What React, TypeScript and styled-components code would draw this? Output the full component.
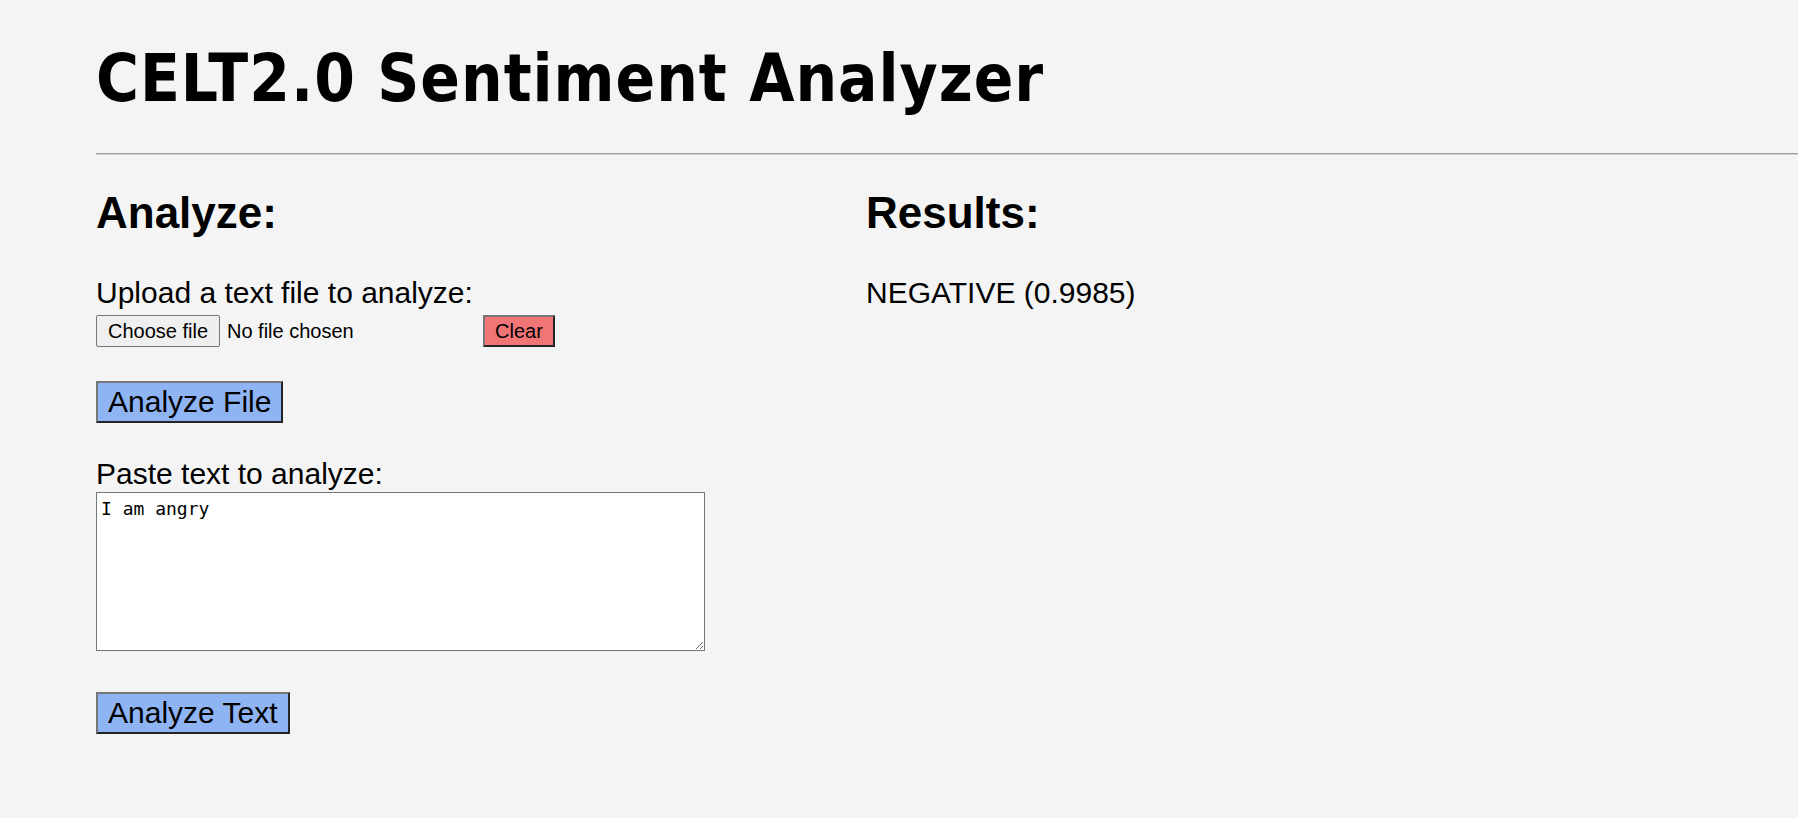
import React from "react";
import styled, { createGlobalStyle } from "styled-components";

const GlobalStyle = createGlobalStyle`
  html, body {
    margin: 0;
    padding: 0;
    background: #f4f4f4;
  }
  body {
    font-family: "Liberation Sans", Arial, sans-serif;
    color: #000;
  }
`;

const Page = styled.div`
  padding: 41px 0 60px 96px;
  box-sizing: border-box;
  width: 100%;
`;

const Title = styled.h1`
  margin: 0;
  font-family: "DejaVu Sans Condensed", "DejaVu Sans", Verdana, sans-serif;
  font-stretch: condensed;
  font-weight: bold;
  font-size: 65px;
  letter-spacing: 1px;
  line-height: 75px;
`;

const Divider = styled.hr`
  margin: 37px 0 33px;
  height: 0;
  border: none;
  border-top: 1px solid #9a9a9a;
  border-bottom: 1px solid #d2d2d2;
`;

const Columns = styled.div`
  display: grid;
  grid-template-columns: 770px 1fr;
  align-items: start;
`;

const Column = styled.section`
  display: flex;
  flex-direction: column;
  align-items: flex-start;
`;

const Heading = styled.h2`
  margin: 0 0 38px;
  font-size: 44px;
  font-weight: bold;
  line-height: 50px;
`;

const Label = styled.label<{ $gap?: number }>`
  display: block;
  margin-top: ${(p) => p.$gap ?? 0}px;
  font-size: 30px;
  line-height: 34px;
`;

const FileRow = styled.div`
  display: flex;
  align-items: center;
  margin-top: 5px;
  height: 32px;
`;

const FilePicker = styled.div`
  display: flex;
  align-items: center;
  width: 387px;
`;

const ChooseButton = styled.button`
  box-sizing: border-box;
  width: 124px;
  height: 32px;
  padding: 0 10px;
  background: #efefef;
  border: 1px solid #767676;
  border-radius: 2px;
  font-family: "Liberation Sans", Arial, sans-serif;
  font-size: 20px;
  color: #000;
  cursor: pointer;
`;

const FileName = styled.span`
  margin-left: 7px;
  font-size: 20px;
  line-height: 23px;
`;

const ActionButton = styled.button<{ $tone: "blue" | "red"; $size: "large" | "small"; $gap?: number }>`
  box-sizing: border-box;
  margin-top: ${(p) => p.$gap ?? 0}px;
  padding: 2px 10px;
  height: ${(p) => (p.$size === "large" ? "42px" : "32px")};
  font-family: "Liberation Sans", Arial, sans-serif;
  font-size: ${(p) => (p.$size === "large" ? "30px" : "20px")};
  line-height: ${(p) => (p.$size === "large" ? "34px" : "24px")};
  color: #000;
  background: ${(p) => (p.$tone === "blue" ? "#8fb4f4" : "#f27576")};
  border-width: 2px;
  border-style: solid;
  border-color: #767676 #242424 #242424 #767676;
  border-radius: 0;
  cursor: pointer;
  white-space: nowrap;
`;

const TextArea = styled.textarea`
  box-sizing: border-box;
  display: block;
  margin-top: 1px;
  width: 609px;
  height: 159px;
  padding: 5px 4px 2px;
  background: #fff;
  border: 1px solid #767676;
  font-family: "DejaVu Sans Mono", "Liberation Mono", monospace;
  font-size: 18px;
  line-height: 22px;
  color: #000;
  outline: none;
`;

const ResultText = styled.p`
  margin: 0;
  font-size: 30px;
  line-height: 34px;
`;

export default function App() {
  return (
    <>
      <GlobalStyle />
      <Page>
        <Title>CELT2.0 Sentiment Analyzer</Title>
        <Divider />
        <Columns>
          <Column>
            <Heading>Analyze:</Heading>
            <Label htmlFor="file">Upload a text file to analyze:</Label>
            <FileRow>
              <FilePicker>
                <ChooseButton id="file" type="button">Choose file</ChooseButton>
                <FileName>No file chosen</FileName>
              </FilePicker>
              <ActionButton type="button" $tone="red" $size="small">
                Clear
              </ActionButton>
            </FileRow>
            <ActionButton type="button" $tone="blue" $size="large" $gap={34}>
              Analyze File
            </ActionButton>
            <Label htmlFor="text" $gap={34}>Paste text to analyze:</Label>
            <TextArea id="text" defaultValue="I am angry" />
            <ActionButton type="button" $tone="blue" $size="large" $gap={41}>
              Analyze Text
            </ActionButton>
          </Column>
          <Column>
            <Heading>Results:</Heading>
            <ResultText>NEGATIVE (0.9985)</ResultText>
          </Column>
        </Columns>
      </Page>
    </>
  );
}
